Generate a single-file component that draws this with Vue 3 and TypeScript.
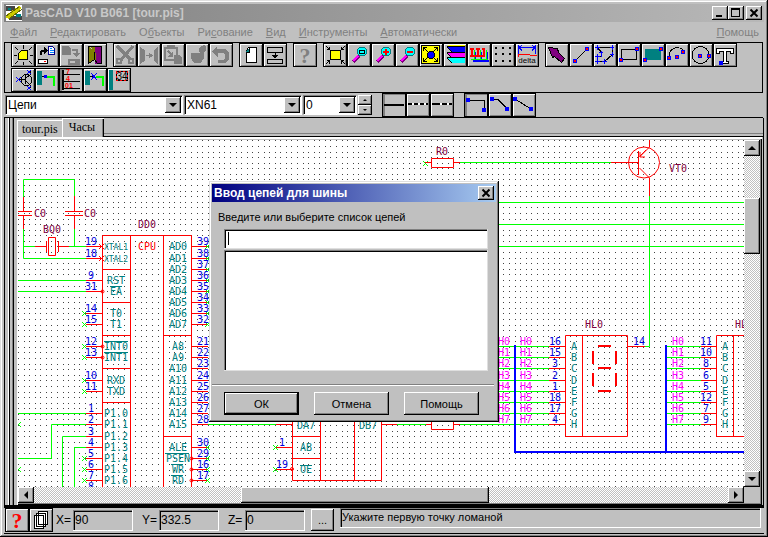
<script setup lang="ts">
import { ref } from 'vue'

type Shape = { d: string; f?: string; s?: string; w?: number; dash?: string }
type Label = { x: number; y: number; t: string; size: number; family?: string; fill?: string; weight?: string }
type Icon = { name: string; shapes: Shape[]; labels?: Label[]; pressed?: boolean; off?: boolean }

const K = '#000'
const G = '#808080'
const line = (d: string, s = K, w = 1, dash?: string): Shape => ({ d, s, w, dash })
const fill = (d: string, f = K, s?: string): Shape => ({ d, f, s })
const node = (x: number, y: number, inner = '#f00'): Shape[] => [
  fill(`M${x - 2} ${y - 2}h4v4h-4z`, '#00f'),
  fill(`M${x - 1} ${y - 1}h2v2h-2z`, inner),
]
const lens = (mark: Shape): Shape[] => [
  line('M6 19L12 13', '#800080', 4),
  line('M6 18L11 13', '#f0f', 2),
  fill('M12.5 4.5h5l2 2v4l-2 2h-5l-2-2v-4z', '#0ff', '#008080'),
  mark,
]

const toolGroups: Icon[][] = [
  [
    {
      name: 'Начать',
      shapes: [
        fill('M10.5 7.5h6v9h-9v-6z', '#ff0', K),
        line('M12.5 2v4M12.5 19v3M3 12.5h3M19 12.5h3M4 4l3 3M21 4l-3 3M4 21l3-3M21 21l-3-3'),
      ],
    },
    {
      name: 'Открыть',
      shapes: [
        line('M6 12V9L8 7.5H10', K, 2),
        fill('M9 4l4 3.5L9 11z'),
        fill('M13.5 3.5h4l2 2v6h-6z', '#fff', '#008'),
        line('M15 5.5h2M15 7.5h4M15 9.5h4', '#08f'),
        fill('M3.5 16.5h9v4h-9z', '#fff', K),
        line('M9 18.5h2', '#f00'),
      ],
    },
    {
      name: 'Сохранить',
      off: true,
      shapes: [
        fill('M3 3h6l3 3v6H3z', G),
        line('M13 7h5v4', G, 2),
        fill('M14 10h7l-3.5 4z', G),
        line('M10 17h10v4h-10zM16 19h3', G, 2),
      ],
    },
    {
      name: 'Выход',
      shapes: [
        fill('M12 3h7v18h-7z', '#800080'),
        fill('M5.5 3.5l7 6v7l-7 4z', '#808000'),
        fill('M12 3.5v6l-5-6z', '#808000'),
        line('M5.5 3.5h13v17h-4l-3-4-6 4zM11.5 9v7'),
      ],
    },
  ],
  [
    {
      name: 'Вырезать',
      off: true,
      shapes: [line('M4 3l13 13M20 3L8 17', G, 3), line('M4 16h4v4H4zM16 16h4v4h-4z', G, 2)],
    },
    {
      name: 'Раздвинуть',
      off: true,
      shapes: [
        fill('M3 4l5 3v11l-5 3zM21 4l-4 3v11l4 3z', G),
        line('M9 12.5h4', G),
        fill('M12 9.5l4 3-4 3z', G),
      ],
    },
    {
      name: 'Вставить',
      off: true,
      shapes: [
        line('M4 5h12v12H4zM7 5V3h6v2', G, 2),
        line('M7 8l4 4', G, 2),
        fill('M12 8v6H6z', G),
        fill('M13 12h5l3 3v6h-8z', G),
      ],
    },
    {
      name: 'Удалить',
      off: true,
      shapes: [
        fill('M6 10h13v5l-3 5H9l-3-5z', G),
        fill('M14 5l5-3 2 2v4l-4 3-3-2z', G),
      ],
    },
    {
      name: 'Отменить',
      off: true,
      shapes: [fill('M3 8l5-5v3h8l4 4v6l-4 4H9v-3h5l2-2v-3l-2-2h-5v5z', G)],
    },
  ],
  [
    {
      name: 'Новый лист',
      shapes: [fill('M9.5 4.5h8v15h-10v-12z', '#fff', K), fill('M7 9l4-5v5z', '#008080'), line('M7 9.5h3V4')],
    },
    {
      name: 'Разбить',
      shapes: [line('M4.5 4.5h15v5h-15zM4.500 16.5h15v4h-15zM12 10v5'), fill('M9 12h6l-3 4z')],
    },
  ],
  [{ name: 'Справка', off: true, shapes: [], labels: [{ x: 12, y: 20, t: '?', size: 22, family: 'Liberation Serif', fill: G }] }],
  [
    {
      name: 'Показать всё',
      shapes: [
        fill('M7.5 7.5h10v9h-10z', '#ff0', K),
        line('M3 3l4 4M22 3l-4 4M3 21l4-4M22 21l-4-4M3.5 6.5h3V3.5M21 6.5h-3V3.5M3.5 17.5h3v3M21 17.5h-3v3'),
      ],
    },
    { name: 'Лупа', shapes: lens(line('M12.5 7.5h5v3h-5z')) },
    { name: 'Увеличить', shapes: lens(line('M12 9h6M15 6v6', '#f00', 2)) },
    { name: 'Уменьшить', shapes: lens(line('M12 9h6', '#f00', 2)) },
    {
      name: 'Центрировать',
      shapes: [
        fill('M2.5 2.5h18v18H2.5z', '#ff0', K),
        line('M5 5l4 4M18 5l-4 4M5 18l4-4M18 18l-4-4M4.5 8V4.5H8M15 4.5h3.5V8M4.5 15v3.5H8M15 18.5h3.5V15'),
        fill('M10.5 8.5h3l2 2v3l-2 2h-3l-2-2v-3z', '#00f', K),
      ],
    },
    {
      name: 'Слои',
      shapes: [
        fill('M4 2h18v2H6z', '#ff0'),
        fill('M4 4h18v5H9z', '#00f'),
        fill('M4 10h18v5H9z', '#f0f'),
        fill('M4 15h18v5H9z', '#0ff'),
        line('M4 3.5h18M4 9.5h18M4 14.5h18M4 4l5 5M4 10l5 5M4 15l5 5'),
      ],
    },
    {
      name: 'Выводы',
      shapes: [
        line('M6 18h16M8 9v9M14 9v9M20 9v9', '#00f', 2),
        line('M4 16h17M7 7v9M13 7v9M19 7v9', '#0f0', 1),
        line('M3 13h15M5 5v8M11 5v8M17 5v8M3 6h4M9 6h4M15 6h3', '#f00', 2),
      ],
    },
    { name: 'Сетка', shapes: [line('M4 5h17M4 11h17M4 18h17', K, 2, '2 5')] },
    {
      name: 'Размер',
      shapes: [line('M3.5 2v9M20.5 2v9M4 4.5h16M7 2l-3 2.5l3 3M17 2l3 2.5l-3 3', '#00f'), line('M3.5 14V11H14l1 1h7', '#f00')],
      labels: [{ x: 12, y: 20, t: 'delta', size: 8, weight: 'normal' }],
    },
  ],
  [
    { name: 'Выбор', shapes: [fill('M3.5 4.5l9 1 1 4 6 6-3 4-7-6-2 1z', '#800080', K)] },
    { name: 'Линия', shapes: [line('M6 18L18 6'), ...node(6, 18), ...node(18, 6)] },
    {
      name: 'Ломаная',
      shapes: [
        line('M4.5 4.5h15v7l-8 7h-7v-5h4v-4z'),
        line('M2 4.5h5M4.5 2v5M17 4.5h4M19.5 2v5M17 11.5h4M19.5 9v5M9 18.5h5M11.5 16v5M2 18.5h5M4.5 16v5M2 13.5h5M4.5 11v5M6 9.5h4M8.5 8v6', '#00f'),
      ],
    },
    { name: 'Прямоугольник', shapes: [line('M4.5 6.5h15v10h-15z'), ...node(20, 6), ...node(4, 17)] },
    { name: 'Заливка', shapes: [fill('M4 6h16v11H4z', '#008080'), ...node(20, 6), ...node(4, 17)] },
    { name: 'Дуга', shapes: [line('M4 14c0-11 12-11 15-6'), ...node(4, 15), ...node(12, 14), ...node(18, 9)] },
    { name: 'Окружность', shapes: [line('M3 12a8.5 8.5 0 1 0 17 0a8.5 8.5 0 1 0-17 0'), ...node(11, 13), ...node(20, 13)] },
    { name: 'Текст', shapes: [fill('M3.5 5.5h17v5h-3v-2h-4v10h2v2h-7v-2h2v-10h-4v2h-3z', '#fff', K), ...node(8, 20, '#00f')] },
  ],
]

const partTools: Icon[] = [
  {
    name: 'Транзистор',
    shapes: [
      line('M10 12a5 5 0 1 0 11 0a5 5 0 1 0-11 0M7 11.5h7M14.5 7v9M15 10l4-3V3M15 13l4 4v3'),
      line('M5 9l5 5M10 9l-5 5M16 2l4 4M20 2l-4 4M16 18l4 4M20 18l-4 4', '#00f'),
    ],
  },
  {
    name: 'Провод',
    shapes: [fill('M2 3h5v14H2z', '#008080'), line('M7 8.5h5'), fill('M9 7h3v3h-3z', '#00f'), line('M12 9h7v9', '#0f0', 2)],
  },
  {
    name: 'Шина',
    pressed: true,
    shapes: [line('M4 2v20', K, 2), line('M4 6.5h17M4 13.5h17M4 20.5h17')],
    labels: [
      { x: 9, y: 6, t: '7', size: 7, fill: '#f00' },
      { x: 9, y: 13, t: '4', size: 7, fill: '#f00' },
      { x: 10, y: 20, t: '01', size: 7, fill: '#f00' },
    ],
  },
  {
    name: 'Разрыв',
    shapes: [
      fill('M2 3h5v14H2z', '#008080'),
      line('M7 8.5h5'),
      line('M13 9h7v9', '#0f0', 2),
      line('M8 5l6 7M14 5l-6 7', '#00f'),
    ],
  },
  {
    name: 'Нумерация',
    shapes: [
      fill('M2 2h4v20H2z', '#008080'),
      line('M9.5 3.5h11v9h-11z', '#f00'),
      line('M9.5 3.5h11v9h-11z', K, 1, '2 2'),
    ],
    labels: [{ x: 15, y: 12, t: '34', size: 10, weight: 'normal' }],
  },
]

const lineStyles: Icon[] = [
  { name: 'Сплошная', pressed: true, shapes: [line('M2 12h20', K, 2)] },
  { name: 'Пунктир', shapes: [line('M2 11h20', '#fff', 2), line('M2 11h20', K, 2, '4 2')] },
  { name: 'Штрих', shapes: [line('M2 11h20', '#fff', 2), line('M2 11h8M12 11h5M19 11h3', K, 2)] },
]
const bendStyles: Icon[] = [
  { name: 'Прямой угол', pressed: true, shapes: [line('M4 7.5h16.5v10'), ...node(4, 7, '#00f'), ...node(20, 17, '#00f')] },
  { name: 'Скос', shapes: [line('M4 6.5h6l10 10'), ...node(4, 6, '#00f'), ...node(19, 16, '#00f')] },
  { name: 'Диагональ', shapes: [line('M3 6l16 10'), ...node(3, 6, '#00f'), ...node(19, 16, '#00f')] },
]

const menu: [string, string, string][] = [
  ['', 'Ф', 'айл'],
  ['', 'Р', 'едактировать'],
  ['О', 'б', 'ъекты'],
  ['Ри', 'с', 'ование'],
  ['', 'В', 'ид'],
  ['', 'И', 'нструменты'],
  ['', 'А', 'втоматически'],
  ['', 'П', 'омощь'],
]

/* Schematic sheet */
const STEP = 5.58
let dots = ''
for (let j = -1; j < 160; j++) {
  for (let i = 0; i < 260; i++) dots += `M${Math.round(18 + i * STEP)} ${Math.round(146 + j * STEP)}h1v1h-1z`
}

type Pin = { y: number; num: string; name: string; end?: 'open' | 'wire'; inv?: boolean; bar?: boolean; small?: boolean }
const left: Pin[] = [
  { y: 246, num: '19', name: 'XTAL1', small: true },
  { y: 258, num: '18', name: 'XTAL2', small: true },
  { y: 280, num: '9', name: 'RST' },
  { y: 291, num: '31', name: 'EA', inv: true, bar: true },
  { y: 313, num: '14', name: 'T0', end: 'open' },
  { y: 324, num: '15', name: 'T1', end: 'open' },
  { y: 346, num: '12', name: 'INT0', end: 'open', inv: true, bar: true },
  { y: 357, num: '13', name: 'INT1', end: 'open', inv: true, bar: true },
  { y: 380, num: '10', name: 'RXD', end: 'open' },
  { y: 391, num: '11', name: 'TXD', end: 'open' },
  { y: 413, num: '1', name: 'P1.0' },
  { y: 424, num: '2', name: 'P1.1' },
  { y: 436, num: '3', name: 'P1.2' },
  { y: 447, num: '4', name: 'P1.3' },
  { y: 458, num: '5', name: 'P1.4', end: 'open' },
  { y: 469, num: '6', name: 'P1.5', end: 'open' },
  { y: 480, num: '7', name: 'P1.6', end: 'open' },
  { y: 491, num: '8', name: '', end: 'open' },
]
const right: Pin[] = [
  ...[246, 258, 269, 280, 291, 302, 313, 324].map((y, i): Pin => ({ y, num: String(39 - i), name: `AD${i}`, end: 'open' })),
  ...[346, 357, 368, 380, 391, 402, 413, 424].map((y, i): Pin => ({ y, num: String(21 + i), name: `A${8 + i}`, end: 'wire' })),
  { y: 447, num: '30', name: 'ALE', end: 'open' },
  { y: 458, num: '29', name: 'PSEN', end: 'open', inv: true, bar: true },
  { y: 469, num: '16', name: 'WR', end: 'open', inv: true, bar: true },
  { y: 480, num: '17', name: 'RD', end: 'open', inv: true, bar: true },
]
const segY = [346, 357, 368, 380, 391, 402, 413, 424]
const display1 = ['16', '15', '3', '2', '1', '18', '17', '4']
const display2 = ['11', '10', '8', '6', '5', '12', '7', '9']
const cross = (x: number, y: number) => `M${x - 2} ${y - 2}l5 5M${x + 3} ${y - 2}l-5 5`
const numX = (x: number, n: string) => (n.length > 1 ? x : x + 3)

const layer = ref('Цепи')
const net = ref('XN61')
const width = ref('0')
const nets = ref('')
const px = ref('90')
const py = ref('332.5')
const pz = ref('0')
</script>

<template>
  <main class="app">
    <header class="titlebar">
      <svg class="logo" width="16" height="16" viewBox="0 0 16 16" shape-rendering="crispEdges" aria-hidden="true">
        <path d="M0 0h16v16H0z" fill="#fff" />
        <path d="M0 1h9v5H0zM3 11h13v4H3z" fill="#444" />
        <path d="M2 3h3v2H2zM10 9h5v3h-5z" fill="#008080" />
        <path d="M0 10L13 1l3 2L3 14l-3-1z" fill="#cc0" />
        <path d="M0 11L13 2M3 14l13-10" stroke="#660" fill="none" />
      </svg>
      <h1>PasCAD V10 B061 [tour.pis]</h1>
      <div class="winbtns">
        <button class="cap" aria-label="Свернуть">
          <svg width="12" height="10" shape-rendering="crispEdges"><path d="M2 7h6v2H2z" /></svg>
        </button>
        <button class="cap" aria-label="Развернуть">
          <svg width="12" height="10" shape-rendering="crispEdges"><path d="M1.500 1.500h8v7h-8z" fill="none" stroke="#000" /><path d="M1 0h9v2H1z" /></svg>
        </button>
        <button class="cap last" aria-label="Закрыть">
          <svg width="12" height="10"><path d="M2.500 1.500l7 7M9.500 1.500l-7 7" fill="none" stroke="#000" stroke-width="2" /></svg>
        </button>
      </div>
    </header>

    <nav class="menu">
      <a v-for="m in menu" :key="m[1] + m[2]" href="#">{{ m[0] }}<u>{{ m[1] }}</u>{{ m[2] }}</a>
    </nav>

    <section class="tools">
      <div v-for="(row, ri) in [toolGroups, [partTools]]" :key="ri" class="toolrow">
        <div v-for="(g, gi) in row" :key="gi" class="group">
          <button v-for="ic in g" :key="ic.name" class="tool" :class="{ pressed: ic.pressed }" :aria-label="ic.name" :disabled="ic.off">
            <svg width="24" height="24" shape-rendering="crispEdges">
              <path v-for="(p, i) in ic.shapes" :key="i" :d="p.d" :fill="p.f || 'none'" :stroke="p.s || 'none'" :stroke-width="p.w || 1" :stroke-dasharray="p.dash" />
              <text v-for="(l, i) in ic.labels" :key="'t' + i" :x="l.x" :y="l.y" :font-size="l.size" :font-family="l.family" :fill="l.fill || '#000'" text-anchor="middle" :font-weight="l.weight || 'bold'">{{ l.t }}</text>
            </svg>
          </button>
        </div>
      </div>
    </section>

    <section class="params">
      <div class="combo wide">
        <select v-model="layer" aria-label="Тип объекта"><option>Цепи</option></select>
        <span class="drop"></span>
      </div>
      <div class="combo mid">
        <select v-model="net" aria-label="Имя цепи"><option>XN61</option></select>
        <span class="drop"></span>
      </div>
      <div class="combo narrow">
        <select v-model="width" aria-label="Ширина"><option>0</option></select>
        <span class="drop"></span>
      </div>
      <div class="spin">
        <button aria-label="Больше"><i class="tri up"></i></button>
        <button aria-label="Меньше"><i class="tri down"></i></button>
      </div>
      <div v-for="(g, gi) in [lineStyles, bendStyles]" :key="gi" class="group styles">
        <button v-for="ic in g" :key="ic.name" class="tool" :class="{ pressed: ic.pressed }" :aria-label="ic.name">
          <svg width="24" height="24" shape-rendering="crispEdges">
            <path v-for="(p, i) in ic.shapes" :key="i" :d="p.d" :fill="p.f || 'none'" :stroke="p.s || 'none'" :stroke-width="p.w || 1" :stroke-dasharray="p.dash" />
          </svg>
        </button>
      </div>
    </section>

    <section class="work">
      <div class="rail"></div>
      <div class="doc">
        <div class="tabs">
          <button class="tab">tour.pis</button>
          <button class="tab active">Часы</button>
        </div>
        <div class="sheetframe">
          <div class="sheet">
            <svg class="drawing" width="100%" height="100%">
              <g transform="translate(-18 -140)">
                <path :d="dots" fill="#444" shape-rendering="crispEdges" />

                <g class="wire">
                  <path d="M23.500 197V179.500H74.500V196M23.500 229V258.500H87M74.500 229V246.500M23.500 246.500H35M69 246.500H87M18 280.500H86M18 291.500H86M18 413.500H86M86 424.500H51.500V458.500H18M86 436.500H62.500V500M86 447.500H74.500V500" />
                  <path d="M208 424.500H276M397 424.500H426M460 424.500H549M460 162.500H611M499 202.500H1400M499 224.500H1400M499 246.500H1400M645 346.500H649.500V196" />
                  <path v-for="y in segY" :key="y" :d="`M499 ${y + 0.5}H549M666 ${y + 0.5}H701`" />
                  <path :d="cross(18, 424) + cross(18, 469) + cross(275, 447) + cross(275, 469) + cross(425, 163)" />
                </g>

                <g class="part">
                  <path d="M23.500 197V211M23.500 215V229M74.500 196V211M74.500 215V229M12 211.500H32M12 215.500H32M65 211.500H83M65 215.500H83" />
                  <path d="M35 246.500H46.500M46.500 241V252M48.500 237.500H55.500V255.500H48.500ZM58.500 241V252M58 246.500H69" />
                  <path d="M102.500 500V235.500H191.500V500M130.500 235V500M163.500 235V500M102 269.500H130M102 302.500H130M102 335.500H130M102 368.500H130M102 402.500H130M163 335.500H191M163 436.500H191" />
                  <path d="M292.500 400V480.500H381.500V400M320.500 400V480M354.500 400V480M292 436.500H320M292 458.500H320M276 424.500H292M276 447.500H292M276 469.500H292M381 424.500H397" />
                  <path d="M426 424.500H431M431.500 419.500H453.500V429.500H431.500ZM453 424.500H460M425 162.500H431M431.500 158.500H453.500V167.500H431.500ZM453 162.500H460M611 162.500H638" />
                  <circle cx="644" cy="162.500" r="15.500" />
                  <path d="M638.500 151V175M649.500 140V147L639.500 157M639.500 168L649.500 178V196M640 152V157H645M640 156L646 150" />
                  <path d="M565.500 335.500H627.500V436.500H565.500ZM582.500 335V436M627 346.500H645M716.500 335.500H800V436.500H716.500ZM733.500 335V436" />
                  <path v-for="y in segY" :key="y" :d="`M549 ${y + 0.5}H565M701 ${y + 0.5}H716`" />
                  <path class="seg" d="M598 346H611M598 368H611M598 391H611M593 351V364M593 373V386M616 351V364M616 373V386" />
                  <circle cx="292" cy="469" r="1.500" />
                  <path :d="cross(101, 246) + cross(101, 258)" />
                </g>

                <g v-for="p in left" :key="'l' + p.num">
                  <path class="red" :d="`M86 ${p.y + 0.5}H102`" />
                  <path v-if="p.end" class="green" :d="cross(84, p.y)" />
                  <circle v-if="p.inv" class="red" cx="102.500" :cy="p.y + 0.5" r="1.500" />
                  <path v-if="p.bar" class="teal" :d="`M${116 - p.name.length * 3} ${p.y - 4.5}h${p.name.length * 6}`" />
                  <text class="num" :x="numX(85, p.num)" :y="p.y - 1">{{ p.num }}</text>
                  <text v-if="p.name" class="pin" :class="{ small: p.small }" x="116" :y="p.y + 4">{{ p.name }}</text>
                </g>
                <g v-for="p in right" :key="'r' + p.num">
                  <path class="red" :d="`M192 ${p.y + 0.5}H208`" />
                  <path v-if="p.end === 'open'" class="green" :d="cross(207, p.y)" />
                  <circle v-if="p.inv" class="red" cx="191.500" :cy="p.y + 0.5" r="1.500" />
                  <path v-if="p.bar" class="teal" :d="`M${177 - p.name.length * 3} ${p.y - 4.5}h${p.name.length * 6}`" />
                  <text class="num" x="197" :y="p.y - 1">{{ p.num }}</text>
                  <text class="pin" x="178" :y="p.y + 4">{{ p.name }}</text>
                </g>

                <g class="ref">
                  <text x="34" y="217">C0</text>
                  <text x="84" y="217">C0</text>
                  <text x="43" y="233">BQ0</text>
                  <text x="138" y="228">DD0</text>
                  <text x="436" y="155">R0</text>
                  <text x="669" y="172">VT0</text>
                  <text x="585" y="328">HL0</text>
                  <text x="735" y="328">HL</text>
                </g>
                <text class="kind" x="138" y="250">CPU</text>
                <text class="pin" x="306" y="429">DA7</text>
                <text class="pin" x="368" y="429">DB7</text>
                <text class="pin" x="306" y="451">AB</text>
                <text class="pin" x="306" y="473">OE</text>
                <path class="teal" d="M300 465.500h12" />
                <text class="num" x="279" y="446">1</text>
                <text class="num" x="276" y="468">19</text>
                <text class="num" x="633" y="345">14</text>

                <g v-for="(y, i) in segY" :key="'s' + y">
                  <text class="net" x="498" :y="y - 1">H{{ i }}</text>
                  <text class="net" x="520" :y="y - 1">H{{ i }}</text>
                  <text class="net" x="672" :y="y - 1">H{{ i }}</text>
                  <text class="num" :x="numX(549, display1[i])" :y="y - 1">{{ display1[i] }}</text>
                  <text class="num" :x="numX(700, display2[i])" :y="y - 1">{{ display2[i] }}</text>
                  <text class="pin" x="574" :y="y + 4">{{ 'ABCDEFGH'[i] }}</text>
                  <text class="pin" x="725" :y="y + 4">{{ 'ABCDEFGH'[i] }}</text>
                </g>
                <path class="bus" d="M515 345V452H1400M666 345V452" />
              </g>
            </svg>
          </div>
          <div class="bar vert">
            <button class="arrow" aria-label="Вверх"><i class="tri up big"></i></button>
            <span class="va"></span><span class="thumb vb"></span><span class="vc"></span>
            <button class="arrow" aria-label="Вниз"><i class="tri down big"></i></button>
          </div>
          <div class="bar horz">
            <button class="arrow" aria-label="Влево"><i class="tri left big"></i></button>
            <span class="ha"></span><span class="thumb hb"></span><span class="hc"></span>
            <button class="arrow" aria-label="Вправо"><i class="tri right big"></i></button>
          </div>
        </div>
      </div>
    </section>

    <footer class="status">
      <div class="group">
        <button class="tool" aria-label="Подсказка">
          <svg width="24" height="24"><text x="12" y="20" font-size="22" font-weight="bold" font-family="Liberation Serif" fill="#f00" text-anchor="middle">?</text></svg>
        </button>
        <button class="tool" aria-label="Листы">
          <svg width="24" height="24" shape-rendering="crispEdges">
            <path d="M9.500 3.500h9v13h-9zM7.500 5.500h9v13h-9zM5.500 7.500h9v13h-9z" fill="#fff" stroke="#000" />
          </svg>
        </button>
      </div>
      <label class="coord"><span>X=</span><input v-model="px" /></label>
      <label class="coord"><span>Y=</span><input v-model="py" /></label>
      <label class="coord"><span>Z=</span><input v-model="pz" /></label>
      <button class="push more">...</button>
      <output class="hint">Укажите первую точку ломаной</output>
    </footer>

    <form class="dialog" role="dialog" aria-labelledby="dlg-title" @submit.prevent>
      <div class="dlgtitle">
        <h2 id="dlg-title">Ввод цепей для шины</h2>
        <button type="button" class="cap" aria-label="Закрыть">
          <svg width="12" height="10"><path d="M2.500 1.500l7 7M9.500 1.500l-7 7" fill="none" stroke="#000" stroke-width="2" /></svg>
        </button>
      </div>
      <div class="dlgbody">
        <label for="nets">Введите или выберите список цепей</label>
        <div class="field"><input id="nets" v-model="nets" type="text" /><i class="caret"></i></div>
        <select class="list" size="8" aria-label="Список цепей"></select>
      </div>
      <hr />
      <div class="actions">
        <button type="submit" class="push default">ОК</button>
        <button type="button" class="push">Отмена</button>
        <button type="button" class="push">Помощь</button>
      </div>
    </form>
  </main>
</template>

<style>
body {
  margin: 0;
  background: #c0c0c0;
}
</style>

<style scoped>
* {
  box-sizing: border-box;
}
.app {
  position: relative;
  display: flex;
  flex-direction: column;
  min-height: 100vh;
  padding: 4px 4px 3px;
  background: #c0c0c0;
  font: 11px/14px 'Liberation Sans', sans-serif;
  color: #000;
  box-shadow: inset -1px -1px #000, inset 1px 1px #dfdfdf, inset -2px -2px #808080, inset 2px 2px #fff;
}
button,
input,
select {
  margin: 0;
  padding: 0;
  border: 0;
  border-radius: 0;
  font: inherit;
  color: #000;
  background: #c0c0c0;
  outline: none;
}
h1,
h2 {
  margin: 0;
  font-size: 12px;
  line-height: 14px;
}
.titlebar {
  display: flex;
  align-items: center;
  height: 18px;
  padding: 0 2px;
  background: linear-gradient(90deg, #808080, #b8b8b8);
}
.titlebar h1 {
  flex: 1;
  padding-left: 3px;
  color: #c8c8c8;
  white-space: nowrap;
}
.winbtns {
  display: flex;
}
.cap {
  display: flex;
  align-items: center;
  justify-content: center;
  width: 16px;
  height: 14px;
  box-shadow: inset -1px -1px #000, inset 1px 1px #fff, inset -2px -2px #808080;
}
.cap.last {
  margin-left: 2px;
}
.menu {
  display: flex;
  gap: 13px;
  height: 20px;
  padding: 3px 5px 0 6px;
}
.menu a {
  color: #808080;
  text-decoration: none;
}
.menu a:last-child {
  margin-left: auto;
}
.tools {
  display: flex;
  flex-direction: column;
  gap: 1px;
  height: 51px;
  padding-left: 6px;
  border: 1px solid #000;
  margin-right: 1px;
}
.toolrow {
  display: flex;
  gap: 6px;
}
.group {
  display: flex;
}
.tool {
  width: 24px;
  height: 24px;
  flex: none;
  box-shadow: inset 0 0 0 1px #000, inset 2px 2px #fff, inset -2px -2px #808080;
}
.tool svg {
  display: block;
}
.tool.pressed {
  box-shadow: inset 0 0 0 1px #000, inset 3px 2px #808080;
}
.params {
  display: flex;
  align-items: center;
  height: 25px;
  padding-left: 1px;
  border-bottom: 1px solid #000;
  margin-right: 1px;
}
.combo {
  position: relative;
  height: 20px;
  margin-right: 1px;
  border: 1px solid;
  border-color: #808080 #fff #fff #808080;
}
.combo.wide {
  width: 178px;
}
.combo.mid {
  width: 118px;
}
.combo.narrow {
  width: 54px;
}
.combo select {
  display: block;
  width: 100%;
  height: 100%;
  padding: 0 18px 0 2px;
  appearance: none;
  background: #fff;
  font-size: 12px;
  box-shadow: inset 1px 1px #000;
}
.drop {
  position: absolute;
  top: 1px;
  right: 1px;
  width: 16px;
  height: 16px;
  pointer-events: none;
  background: #c0c0c0;
  box-shadow: inset -1px -1px #000, inset 1px 1px #fff, inset -2px -2px #808080;
}
.drop::after {
  content: '';
  position: absolute;
  left: 4px;
  top: 6px;
  border: 4px solid transparent;
  border-top-color: #000;
  border-bottom: 0;
}
.spin {
  display: flex;
  flex-direction: column;
  width: 14px;
}
.spin button,
.arrow {
  display: flex;
  align-items: center;
  justify-content: center;
  box-shadow: inset -1px -1px #000, inset 1px 1px #fff, inset -2px -2px #808080;
}
.spin button {
  height: 10px;
}
.tri {
  border: 2px solid transparent;
}
.tri.big {
  border-width: 4px;
}
.tri.up {
  border-top: 0;
  border-bottom-color: #000;
}
.tri.down {
  border-bottom: 0;
  border-top-color: #000;
}
.tri.left {
  border-left: 0;
  border-right-color: #000;
}
.tri.right {
  border-right: 0;
  border-left-color: #000;
}
.styles {
  margin-left: 10px;
}
.work {
  display: flex;
  flex: 1;
  min-height: 0;
}
.rail {
  width: 11px;
  background: linear-gradient(90deg, #000 1px, #c0c0c0 1px 4px, #fff 4px 5px, #000 5px 6px, #c0c0c0 6px 8px, #808080 8px 9px, #000 9px 10px, #c0c0c0 10px);
}
.doc {
  display: flex;
  flex-direction: column;
  flex: 1;
  min-width: 0;
  padding-left: 2px;
  border-right: 1px solid #000;
}
.tabs {
  display: flex;
  align-items: flex-end;
  height: 19px;
}
.tabs::after {
  content: '';
  flex: 1;
  height: 2px;
  border-top: 1px solid #808080;
  border-bottom: 1px solid #000;
}
.tab {
  height: 17px;
  padding: 0 4px 0 5px;
  font: 12px/16px 'Liberation Serif', serif;
  box-shadow: inset 1px 1px #fff;
}
.tab.active {
  height: 19px;
  padding: 0 9px 1px 7px;
  box-shadow: inset 1px 1px #fff, inset -1px 0 #000, inset -2px 0 #808080;
}
.sheetframe {
  flex: 1;
  display: grid;
  grid-template: minmax(0, 1fr) 16px / minmax(0, 1fr) 16px;
  padding: 3px 2px 2px 1px;
  margin-right: 1px;
  box-shadow: inset 1px 2px #fff, inset -1px -1px #000, inset -2px -2px #808080;
}
.sheet {
  position: relative;
  min-height: 340px;
  background: #fff;
  overflow: hidden;
}
.drawing {
  position: absolute;
  inset: 0;
}
.wire path,
.green {
  fill: none;
  stroke: #0f0;
}
.part path,
.part circle,
.red {
  fill: none;
  stroke: #f00;
}
.part .seg {
  stroke-width: 2px;
}
.bus {
  fill: none;
  stroke: #00f;
  stroke-width: 2px;
}
.teal {
  fill: none;
  stroke: #008080;
}
.drawing text {
  font: 10px 'DejaVu Sans Mono', monospace;
}
.drawing .pin {
  fill: #008080;
  text-anchor: middle;
}
.drawing .small {
  font-size: 8px;
}
.num {
  fill: #00d;
}
.net {
  fill: #f0f;
}
.ref {
  fill: #800040;
}
.kind {
  fill: #f00;
}
.bar {
  display: flex;
  background: repeating-conic-gradient(#fff 0 25%, #c0c0c0 0 50%) 0 0 / 2px 2px;
}
.bar.vert {
  flex-direction: column;
}
.arrow {
  flex: none;
  width: 16px;
  height: 16px;
}
.thumb {
  background: #c0c0c0;
  box-shadow: inset -1px -1px #000, inset 1px 1px #fff, inset -2px -2px #808080;
}
.va {
  flex: 42;
}
.vb {
  flex: 56;
}
.vc {
  flex: 217;
}
.ha {
  flex: 207;
}
.hb {
  flex: 248;
}
.hc {
  flex: 239;
}
.status {
  display: flex;
  height: 29px;
  padding: 0 3px 1px 1px;
  border-top: 3px solid #000;
  border-bottom: 1px solid #000;
}
.coord {
  display: flex;
  align-items: center;
  margin-right: 6px;
  font-size: 12px;
}
.coord span {
  width: 20px;
  padding-left: 3px;
}
.coord input {
  width: 60px;
  height: 21px;
  padding: 0 2px;
  box-shadow: inset -1px -1px #fff, inset 1px 1px #808080, inset 2px 2px #000;
}
.push {
  width: 75px;
  height: 23px;
  box-shadow: inset -1px -1px #000, inset 1px 1px #fff, inset -2px -2px #808080;
}
.push.default {
  box-shadow: inset 0 0 0 1px #000, inset -2px -2px #000, inset 2px 2px #fff, inset -3px -3px #808080;
}
.more {
  width: 23px;
  height: 22px;
  margin: 1px 6px 0 0;
}
.hint {
  flex: 1;
  height: 20px;
  padding: 2px;
  box-shadow: inset -1px -1px #fff, inset 1px 1px #808080, inset 2px 2px #000;
  white-space: nowrap;
}
.dialog {
  position: absolute;
  left: 209px;
  top: 181px;
  width: 290px;
  padding: 3px;
  background: #c0c0c0;
  box-shadow: inset -1px -1px #000, inset 1px 1px #dfdfdf, inset -2px -2px #808080, inset 2px 2px #fff;
}
.dlgtitle {
  display: flex;
  align-items: center;
  justify-content: space-between;
  height: 18px;
  padding: 0 2px;
  background: linear-gradient(90deg, #000080, #a6caf0);
  color: #fff;
}
.dlgbody {
  display: flex;
  flex-direction: column;
  padding: 8px 8px 0 12px;
}
.dlgbody label {
  margin-left: -6px;
}
.field {
  position: relative;
  margin-top: 5px;
}
.field input {
  display: block;
  width: 100%;
  height: 20px;
  padding: 0 4px;
  background: #fff;
  box-shadow: inset -1px -1px #dfdfdf, inset 1px 1px #808080, inset 2px 2px #000;
}
.caret {
  position: absolute;
  left: 4px;
  top: 3px;
  width: 1px;
  height: 13px;
  background: #000;
}
.list {
  height: 121px;
  margin-top: 1px;
  background: #fff;
  box-shadow: inset -1px -1px #dfdfdf, inset 1px 1px #808080, inset 2px 2px #000;
}
hr {
  margin: 13px 2px 6px 0;
  border: 0;
  border-top: 1px solid #808080;
  border-bottom: 1px solid #fff;
}
.actions {
  display: flex;
  gap: 15px;
  padding: 0 12px 4px;
}
</style>
